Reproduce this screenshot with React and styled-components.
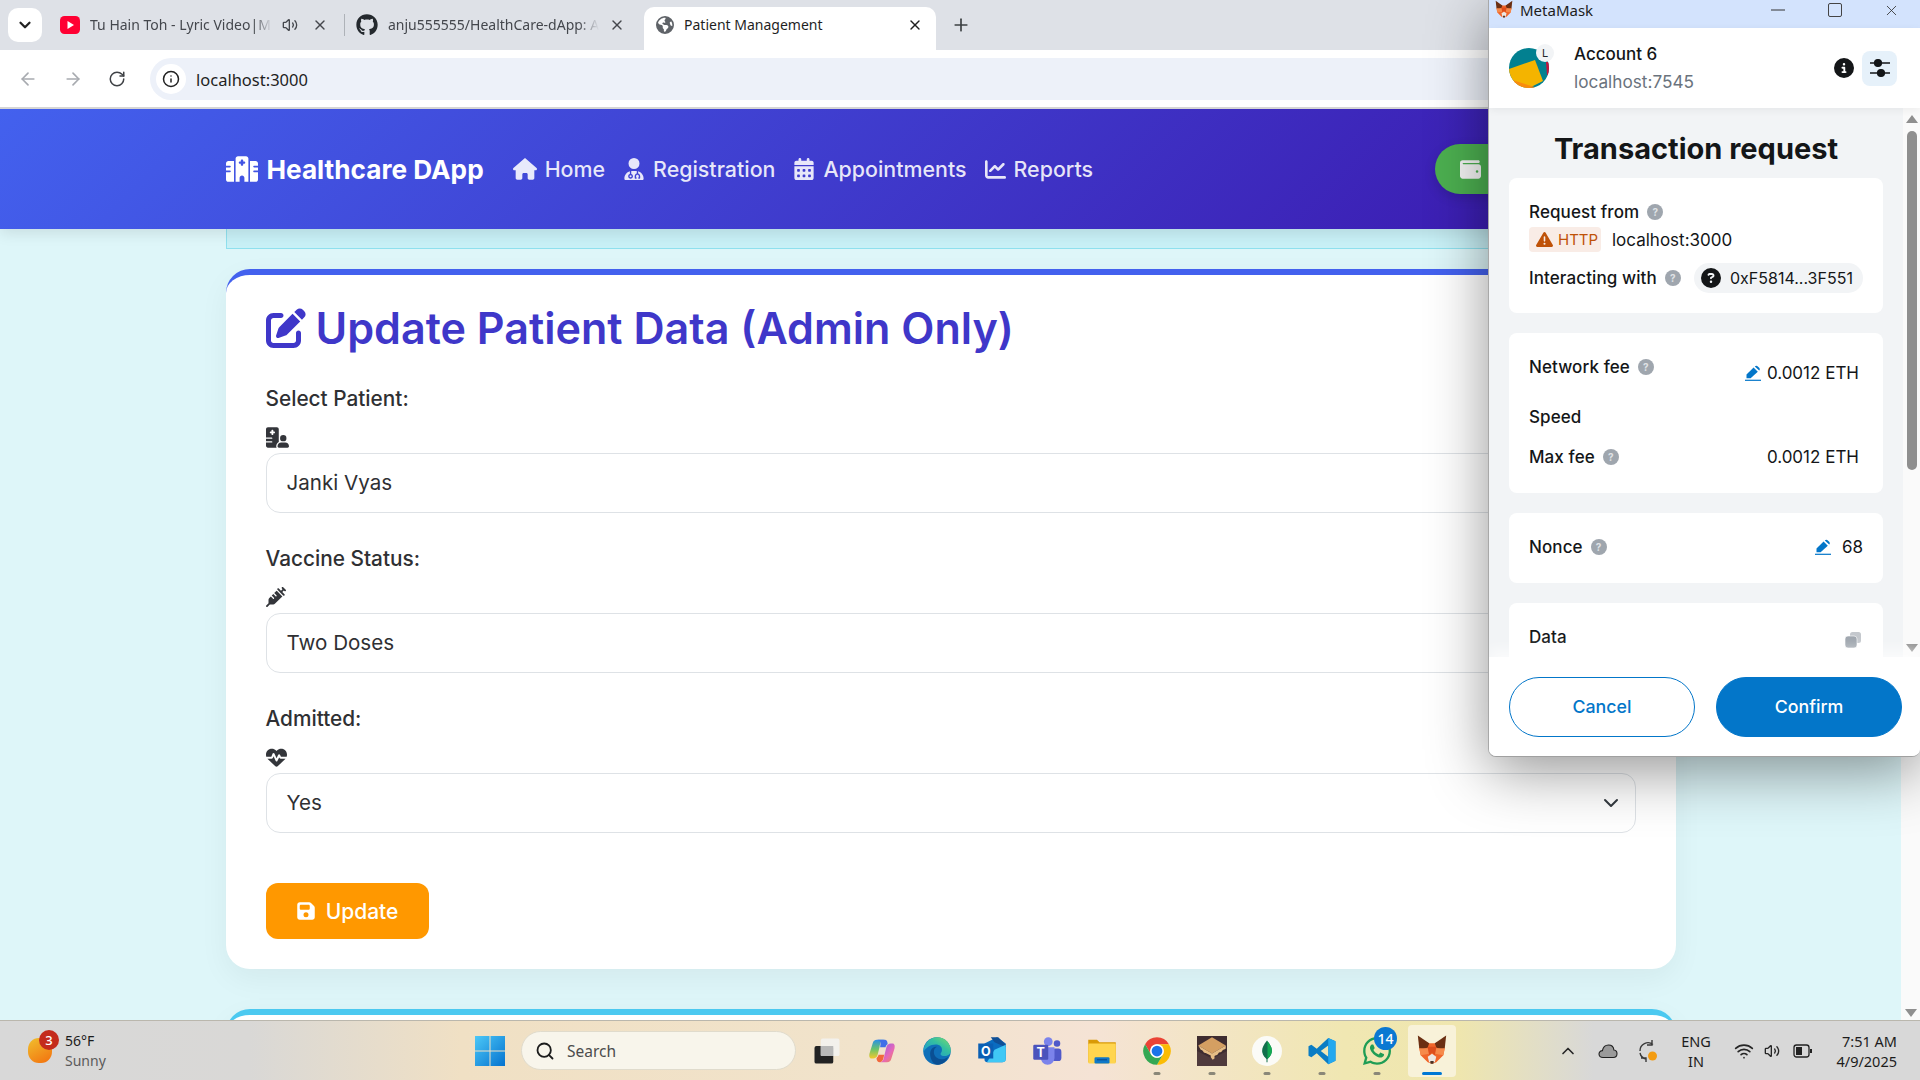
import React from 'react';
import styled, { createGlobalStyle } from 'styled-components';
import {
  FaHospital, FaHouse, FaUserDoctor, FaCalendarDays, FaChartLine, FaPenToSquare, FaHospitalUser,
  FaSyringe, FaHeartPulse, FaFloppyDisk, FaWallet, FaGithub, FaEarthAmericas,
  FaCircleInfo, FaTriangleExclamation, FaCircleQuestion, FaWhatsapp,
} from 'react-icons/fa6';
import {
  ChevronDown, X, Plus, ArrowLeft, ArrowRight, RotateCw, Info, Volume2, Search,
  ChevronUp, Wifi,
} from 'lucide-react';

const PAGE_FONT = `Inter, "Noto Sans", sans-serif`;
const WIN_FONT = `"Noto Sans", "Open Sans", sans-serif`;
const MM_FONT = `Inter, "Noto Sans", sans-serif`;

const Global = createGlobalStyle`
  html, body { margin: 0; padding: 0; height: 100%; overflow: hidden; }
  * { box-sizing: border-box; }
`;

const Screen = styled.div`
  position: relative;
  width: 1920px;
  height: 1080px;
  display: flex;
  flex-direction: column;
  overflow: hidden;
  background: #def6f9;
`;

/* browser chrome */
const TabStrip = styled.div`
  height: 50px;
  background: #dee1e7;
  display: flex;
  align-items: flex-end;
  padding-left: 8px;
  font-family: ${WIN_FONT};
`;

const TabSearch = styled.div`
  width: 34px;
  height: 34px;
  align-self: flex-start;
  margin: 8px 6px 0 0;
  background: #fff;
  border-radius: 10px;
  display: flex;
  align-items: center;
  justify-content: center;
  color: #222;
`;

const Tab = styled.div`
  position: relative;
  width: ${p => p.$w}px;
  height: 43px;
  padding: 0 ${p => p.$pr}px 8px 12px;
  display: flex;
  align-items: center;
  gap: 10px;
  font-size: 14px;
  color: ${p => (p.$active ? '#1f1f1f' : '#44474d')};
  background: ${p => (p.$active ? '#fff' : 'transparent')};
  border-radius: 10px 10px 0 0;
  ${p => p.$sep && `&::before {
    content: '';
    position: absolute;
    left: 0;
    top: 7px;
    width: 1px;
    height: 22px;
    background: #aeb2b8;
  }`}
`;

const TabTitle = styled.span`
  flex: 1;
  white-space: nowrap;
  overflow: hidden;
  ${p => p.$fade && `-webkit-mask-image: linear-gradient(to right, #000 90%, transparent);`}
`;

const TabClose = styled(X)`
  margin-left: ${p => p.$ml || 0}px;
  flex-shrink: 0;
`;

const NewTab = styled.div`
  margin: 0 0 8px 15px;
  height: 34px;
  display: flex;
  align-items: center;
  color: #3c4043;
`;

const AddressRow = styled.div`
  height: 59px;
  background: #fff;
  border-bottom: 2px solid #d5d5d5;
  display: flex;
  align-items: flex-start;
  padding: 8px 0 0 18px;
  font-family: ${WIN_FONT};
`;

const NavArrow = styled.div`
  width: 45px;
  height: 42px;
  display: flex;
  align-items: center;
  color: ${p => (p.$dim ? '#a8abb0' : '#3f4246')};
`;

const Omnibox = styled.div`
  flex: 1;
  height: 42px;
  margin-left: -3px;
  background: #edf1f9;
  border-radius: 21px;
  display: flex;
  align-items: center;
  padding-left: 6px;
  font-size: 16.5px;
  color: #1f1f1f;
`;

const SiteInfo = styled.div`
  width: 30px;
  height: 30px;
  border-radius: 50%;
  background: #fff;
  display: flex;
  align-items: center;
  justify-content: center;
  margin-right: 10px;
`;

/* web page */
const PageView = styled.div`
  flex: 1;
  min-height: 0;
  display: flex;
  overflow: hidden;
`;

const PageColumn = styled.div`
  flex: 1;
  min-width: 0;
  font-family: ${PAGE_FONT};
`;

const PageScrollbar = styled.div`
  width: 19px;
  background: #fafafa;
  display: flex;
  flex-direction: column;
  justify-content: flex-end;
  align-items: center;
  padding-bottom: 3px;
`;

const Arrow = styled.div`
  width: 0;
  height: 0;
  border-left: 6px solid transparent;
  border-right: 6px solid transparent;
  ${p => (p.$up ? 'border-bottom: 8px solid #8f8f8f;' : 'border-top: 8px solid #8f8f8f;')}
`;

const Navbar = styled.nav`
  position: relative;
  height: 120px;
  background: linear-gradient(135deg, #4361ee, #3a0ca3);
  box-shadow: 0 4px 14px rgba(0, 0, 0, 0.1);
`;

const NavInner = styled.div`
  width: 1450px;
  height: 100%;
  margin: 0 auto;
  display: flex;
  align-items: center;
`;

const Brand = styled.div`
  display: flex;
  align-items: center;
  gap: 9px;
  font-size: 26.2px;
  font-weight: 700;
  color: #fff;
  margin-right: 29px;
  white-space: nowrap;
`;

const NavLinks = styled.div`
  display: flex;
  gap: 18px;
`;

const NavLink = styled.a`
  display: flex;
  align-items: center;
  gap: 8px;
  font-size: 21.4px;
  font-weight: 500;
  color: rgba(255, 255, 255, 0.88);
`;

const WalletButton = styled.div`
  margin-left: auto;
  width: 241px;
  height: 50px;
  border-radius: 25px;
  background: #4caf50;
  display: flex;
  align-items: center;
  padding-left: 25px;
  color: #f4f4f4;
  box-shadow: 0 4px 12px rgba(0, 0, 0, 0.15);
`;

const Container = styled.main`
  width: 1450px;
  margin: 0 auto;
`;

const ScrolledCard = styled.div`
  height: 20px;
  margin-bottom: 20px;
  background: #c8f0f6;
  border-left: 1px solid #8fe0ee;
  border-bottom: 1px solid #8fe0ee;
`;

const Card = styled.section`
  background: #fff;
  border-top: 6px solid ${p => p.$accent};
  border-radius: 24px;
  padding: 26px 40px 30px;
  margin-bottom: 40px;
  min-height: ${p => p.$minH || 0}px;
  box-shadow: 0 10px 30px rgba(0, 0, 0, 0.05);
`;

const CardTitle = styled.h2`
  margin: 0 0 30px;
  height: 54px;
  display: flex;
  align-items: center;
  gap: 10px;
  font-size: 43.1px;
  font-weight: 600;
  color: #3f37c9;
  white-space: nowrap;
`;

const FormGroup = styled.div`
  margin-bottom: 32px;
  &:last-of-type { margin-bottom: 50px; }
`;

const FieldLabel = styled.label`
  display: block;
  height: 26px;
  line-height: 27px;
  margin-bottom: 16px;
  font-size: 20.8px;
  font-weight: 500;
  color: #2f3033;
`;

const FieldIcon = styled.div`
  height: 20px;
  margin-bottom: 6px;
  color: #33353a;
  display: flex;
  align-items: center;
`;

const SelectBox = styled.div`
  height: 60px;
  border: 1.5px solid #dee2e6;
  border-radius: 14px;
  padding: 0 12px 1px 20px;
  display: flex;
  align-items: center;
  justify-content: space-between;
  font-size: 20.6px;
  color: #2f3033;
`;

const UpdateButton = styled.button`
  width: 163px;
  height: 56px;
  border: none;
  border-radius: 12px;
  background: #ff9800;
  color: #fff;
  font-family: inherit;
  font-size: 21px;
  font-weight: 500;
  display: flex;
  align-items: center;
  justify-content: center;
  gap: 10px;
`;

/* metamask popup */
const MmWindow = styled.aside`
  position: absolute;
  top: 0;
  right: 0;
  width: 432px;
  height: 757px;
  display: flex;
  flex-direction: column;
  background: #f2f4f6;
  border-left: 1px solid #a8a8a8;
  border-bottom: 1px solid #a0a0a0;
  border-radius: 0 0 8px 8px;
  box-shadow: 0 14px 60px rgba(0, 0, 0, 0.42);
  font-family: ${MM_FONT};
  color: #141618;
  overflow: hidden;
`;

const TitleBar = styled.div`
  height: 28px;
  background: #d3e3fd;
  display: flex;
  align-items: center;
  padding: 0 0 8px 5px;
  gap: 6px;
  font-family: ${WIN_FONT};
  font-size: 15px;
  color: #1c1c1c;
`;

const WindowControls = styled.div`
  margin-left: auto;
  display: flex;
  align-items: center;
`;

const WindowControl = styled.div`
  width: 57px;
  display: flex;
  justify-content: center;
  color: #333;
`;

const AccountBar = styled.header`
  height: 80px;
  background: #fff;
  display: flex;
  align-items: center;
  padding: 0 23px 0 20px;
  box-shadow: 0 2px 8px rgba(0, 0, 0, 0.06);
  position: relative;
  z-index: 1;
`;

const AvatarWrap = styled.div`
  position: relative;
  width: 40px;
  height: 40px;
  margin-right: 25px;
`;

const AvatarBadge = styled.span`
  position: absolute;
  top: -4px;
  right: -5px;
  width: 18px;
  height: 18px;
  border-radius: 50%;
  background: #f2f4f6;
  display: flex;
  align-items: center;
  justify-content: center;
  font-size: 11px;
  color: #24272a;
`;

const AccountText = styled.div`
  flex: 1;
  display: flex;
  flex-direction: column;
  gap: 5px;
`;

const AccountName = styled.div`
  font-size: 17px;
  font-weight: 500;
  line-height: 22px;
`;

const AccountHost = styled.div`
  font-size: 17.2px;
  line-height: 23px;
  color: #6a737d;
`;

const SettingsButton = styled.div`
  width: 35px;
  height: 35px;
  margin-left: 8px;
  border-radius: 8px;
  background: #e6f1fa;
  display: flex;
  align-items: center;
  justify-content: center;
`;

const MmBody = styled.div`
  flex: 1;
  min-height: 0;
  display: flex;
  overflow: hidden;
`;

const MmContent = styled.div`
  flex: 1;
  min-width: 0;
  padding: 22px 20px 0;
  display: flex;
  flex-direction: column;
  gap: 20px;
`;

const MmHeading = styled.h1`
  margin: 0 0 -10px;
  height: 38px;
  line-height: 38px;
  text-align: center;
  font-size: 29px;
  font-weight: 700;
`;

const MmCard = styled.div`
  flex-shrink: 0;
  background: #fff;
  border-radius: 8px;
  padding: 22px 20px ${p => p.$pb || 24}px;
`;

const MmRow = styled.div`
  display: flex;
  align-items: ${p => p.$align || 'center'};
  justify-content: space-between;
  min-height: ${p => p.$h || 24}px;
  margin-top: ${p => p.$mt || 0}px;
  padding-right: ${p => p.$pr || 0}px;
`;

const MmLabel = styled.div`
  display: flex;
  align-items: center;
  height: 24px;
  gap: 8px;
  font-size: 17px;
  font-weight: 500;
  letter-spacing: 0.1px;
`;

const Help = styled.span`
  width: 16px;
  height: 16px;
  border-radius: 50%;
  background: #9fa6ae;
  color: #dfe2e5;
  font-size: 10px;
  font-weight: 700;
  display: flex;
  align-items: center;
  justify-content: center;
`;

const OriginRow = styled.div`
  display: flex;
  align-items: center;
  gap: 11px;
  margin-top: 3px;
  font-size: 17px;
`;

const HttpBadge = styled.span`
  width: 72px;
  height: 25px;
  border-radius: 4px;
  background: #f9ece6;
  color: #bf5208;
  display: flex;
  align-items: center;
  gap: 5px;
  padding-left: 7px;
  font-size: 15px;
`;

const AddressPill = styled.div`
  width: 169px;
  height: 30px;
  border-radius: 15px;
  background: #f2f4f6;
  display: flex;
  align-items: center;
  gap: 9px;
  padding-left: 7px;
  font-size: 16px;
  white-space: nowrap;
`;

const MmValue = styled.div`
  display: flex;
  align-items: center;
  gap: ${p => p.$gap || 6}px;
  font-size: 17px;
  line-height: 20px;
  margin-top: ${p => p.$mt || 0}px;
`;

const MmScrollbar = styled.div`
  width: 17px;
  background: #fafafa;
  display: flex;
  flex-direction: column;
  align-items: center;
  padding-top: 7px;
`;

const MmThumb = styled.div`
  width: 10px;
  height: 339px;
  margin-top: 8px;
  border-radius: 5px;
  background: #8f8f8f;
`;

const MmThumbTrack = styled.div`
  flex: 1;
`;

const MmArrowBox = styled.div`
  padding-bottom: 5px;
`;

const MmFooter = styled.footer`
  height: 99px;
  background: #fff;
  display: flex;
  gap: 21px;
  padding: 20px 18px 0 20px;
  position: relative;
  box-shadow: 0 -8px 12px rgba(255, 255, 255, 0.6);
`;

const MmButton = styled.button`
  width: 186px;
  height: 60px;
  padding: 0 0 2px;
  border-radius: 30px;
  border: 1px solid #0376c9;
  background: ${p => (p.$primary ? '#0376c9' : '#fff')};
  color: ${p => (p.$primary ? '#fff' : '#0376c9')};
  font-family: inherit;
  font-size: 17.8px;
  font-weight: 500;
`;

/* windows taskbar */
const Taskbar = styled.footer`
  position: relative;
  height: 60px;
  flex-shrink: 0;
  border-top: 1px solid #bab7ad;
  background: linear-gradient(90deg, #d8d8d8 0%, #d9d8d6 13%, #f0e0c4 24%, #f1e3cb 45%, #f5e3d5 57%, #f0e7b2 70%, #efe6ae 76%, #d8d8d8 83%, #d8d8d8 100%);
  display: flex;
  align-items: center;
  font-family: ${WIN_FONT};
  color: #1c1c1c;
`;

const Weather = styled.div`
  width: 475px;
  padding-left: 28px;
  display: flex;
  align-items: center;
  gap: 13px;
`;

const SunWrap = styled.div`
  position: relative;
  width: 24px;
  height: 25px;
  border-radius: 45%;
  background: linear-gradient(150deg, #f0c02e, #f36f0e);
`;

const CountBadge = styled.span`
  position: absolute;
  top: ${p => p.$top}px;
  right: ${p => p.$right}px;
  width: ${p => p.$size}px;
  height: ${p => p.$size}px;
  border-radius: 50%;
  background: ${p => p.$bg};
  color: #fff;
  font-size: ${p => p.$font}px;
  font-weight: 500;
  display: flex;
  align-items: center;
  justify-content: center;
`;

const WeatherText = styled.div`
  display: flex;
  flex-direction: column;
  gap: 2px;
  font-size: 14px;
  line-height: 18px;
`;

const WeatherSub = styled.span`
  color: #5b5b5b;
`;

const SearchBox = styled.div`
  width: 275px;
  height: 39px;
  margin: 0 3px 0 16px;
  border-radius: 20px;
  background: #f8f5eb;
  border: 1px solid #e0dbcc;
  display: flex;
  align-items: center;
  gap: 12px;
  padding-left: 13px;
  font-size: 15.5px;
  color: #4c4c4c;
`;

const TaskSlot = styled.div`
  position: relative;
  width: 55px;
  height: 52px;
  display: flex;
  align-items: center;
  justify-content: center;
  border-radius: 4px;
  ${p => p.$active && 'background: #f8f2d9; width: 48px; margin: 0 3.5px;'}
  ${p => p.$dot && `&::after {
    content: '';
    position: absolute;
    bottom: 2px;
    left: 50%;
    transform: translateX(-50%);
    width: ${p.$active ? 20 : 7}px;
    height: 3px;
    border-radius: 2px;
    background: ${p.$active ? '#0078d4' : '#8a8778'};
  }`}
`;

const Tray = styled.div`
  margin-left: auto;
  display: flex;
  align-items: center;
  padding-right: 23px;
`;

const TraySlot = styled.div`
  width: ${p => p.$w}px;
  display: flex;
  justify-content: center;
  color: #262626;
`;

const TrayStack = styled.div`
  width: ${p => p.$w}px;
  display: flex;
  flex-direction: column;
  align-items: ${p => p.$align || 'center'};
  gap: 2px;
  font-size: 14.5px;
  line-height: 18px;
  white-space: nowrap;
`;

const Icon = ({ size = 30, children }) => (
  <svg width={size} height={size} viewBox="0 0 24 24">{children}</svg>
);

const YoutubeLogo = () => (
  <svg width="20" height="20" viewBox="0 0 20 20">
    <rect x="0" y="1" width="20" height="18" rx="4.5" fill="#ff0033" />
    <polygon points="7.5,6 14,10 7.5,14" fill="#fff" />
  </svg>
);

const Fox = ({ size = 34 }) => (
  <Icon size={size}>
    <polygon points="3,10 6,5 10,6.5 14,6.5 18,5 21,10 20,15 15,20 12,21 9,20 4,15" fill="#f0662a" />
    <polygon points="2,1 10,6.5 9,9.5 5,11 3,10" fill="#6b2f12" />
    <polygon points="22,1 14,6.5 15,9.5 19,11 21,10" fill="#6b2f12" />
    <polygon points="3,10 9,10 10,14 4,15" fill="#f68a4a" />
    <polygon points="21,10 15,10 14,14 20,15" fill="#f68a4a" />
    <polygon points="9,9 15,9 14,15 12,13 10,15" fill="#dd4e1c" />
    <polygon points="9,16 12,14 15,16 14,20 10,20" fill="#ece7e2" />
    <polygon points="10.8,19 13.2,19 13,21 11,21" fill="#4a3226" />
  </Icon>
);

const ChromeLogo = () => (
  <Icon>
    <path d="M12 1A11 11 0 0 1 21.53 6.5H12A5.5 5.5 0 0 0 7.24 14.75L2.47 6.5A11 11 0 0 1 12 1Z" fill="#ea4335" />
    <path d="M21.53 6.5A11 11 0 0 1 12 23L16.76 14.75A5.5 5.5 0 0 0 12 6.5Z" fill="#fbbc04" />
    <path d="M12 23A11 11 0 0 1 2.47 6.5L7.24 14.75A5.5 5.5 0 0 0 16.76 14.75Z" fill="#34a853" />
    <circle cx="12" cy="12" r="5.4" fill="#fff" />
    <circle cx="12" cy="12" r="4.3" fill="#1a73e8" />
  </Icon>
);

const TaskViewLogo = () => (
  <Icon>
    <rect x="2" y="8" width="15" height="14" rx="1.5" fill="#222" />
    <rect x="7" y="2" width="15" height="14" rx="1.5" fill="#f4f4f4" fillOpacity="0.8" />
    <rect x="7" y="8" width="10" height="8" fill="#b8b8b8" />
  </Icon>
);

const CopilotLogo = () => (
  <Icon>
    <defs>
      <linearGradient id="copA" x1="0" y1="0" x2="0" y2="1">
        <stop offset="0" stopColor="#2a8fe8" /><stop offset="0.5" stopColor="#6ac46a" /><stop offset="1" stopColor="#f5c92c" />
      </linearGradient>
      <linearGradient id="copB" x1="0" y1="0" x2="1" y2="1">
        <stop offset="0" stopColor="#8a5cf0" /><stop offset="0.6" stopColor="#e668b8" /><stop offset="1" stopColor="#f28a4c" />
      </linearGradient>
    </defs>
    <path d="M8 3H14C11 3 10.5 6 10 9L8.5 15C8 17 6.5 18 5 18H3.5C2 18 1.5 16 2 14L4.5 6C5 4 6 3 8 3Z" fill="url(#copA)" />
    <path d="M16 21H10C13 21 13.5 18 14 15L15.5 9C16 7 17.5 6 19 6H20.5C22 6 22.5 8 22 10L19.5 18C19 20 18 21 16 21Z" fill="url(#copB)" />
    <path d="M8 3H14.5C16 3 16.5 5 16.5 6.5C15.5 7 15 8 14.8 9H10.5C11 6 11.5 3 8 3Z" fill="#3f6fe8" />
    <path d="M10 21C9 21 7.5 19.5 7.6 17.5C8.5 17 9 16 9.2 15H13.7C13.2 18 12.6 21 10 21Z" fill="#f2683c" />
  </Icon>
);

const EdgeLogo = () => (
  <Icon>
    <defs>
      <linearGradient id="edgeTop" x1="0" y1="1" x2="1" y2="0">
        <stop offset="0" stopColor="#1a8fd8" /><stop offset="0.6" stopColor="#34c0a0" /><stop offset="1" stopColor="#7fdc6a" />
      </linearGradient>
    </defs>
    <circle cx="12" cy="12" r="11" fill="#0f6fb8" />
    <path d="M12 1C18.5 1 23 6 23 11.5C23 14.5 20.5 16 18 16C16 16 14.8 15.2 14.8 14.3C14.8 13.5 16 13 16 11C16 8.5 14 6.8 11 6.8C6.5 6.8 2.8 9.5 1 13C1 6.5 6 1 12 1Z" fill="url(#edgeTop)" />
    <path d="M6.5 14C6.5 10 9.5 8.5 12 8.5C10 9.5 9.5 11 9.5 13C9.5 16.5 13 19 16.5 18.5C18.5 18.2 20 17.5 21 16.5C19.5 20.5 16 23 12 23C8.5 22.5 6.5 18 6.5 14Z" fill="#0a4f93" />
  </Icon>
);

const OutlookLogo = () => (
  <Icon>
    <path d="M6 6L16 1L23 6V18C23 20 22 21 20 21H8C7 21 6 20 6 19Z" fill="#0a6cc0" />
    <path d="M11 1L17 1L23 7V9L14 5Z" fill="#0f4f96" />
    <path d="M8 21L14 11L23 7V19C23 20 22 21 20 21Z" fill="#40c8f5" />
    <rect x="1" y="6" width="12" height="12" fill="#0a5fb4" />
    <text x="7" y="15.8" textAnchor="middle" fontFamily="Inter, sans-serif" fontSize="10" fontWeight="700" fill="#fff">O</text>
  </Icon>
);

const TeamsLogo = () => (
  <Icon>
    <circle cx="20" cy="6" r="2.6" fill="#5059c9" />
    <rect x="16" y="10" width="7.5" height="10" rx="2.5" fill="#5059c9" />
    <circle cx="13" cy="4.5" r="3.5" fill="#7b83eb" />
    <path d="M7 9H18V17C18 20.5 15.5 23 12.5 23C9.5 23 7 20.5 7 17Z" fill="#7b83eb" />
    <rect x="1" y="7" width="12" height="12" rx="1" fill="#4b53bc" />
    <text x="7" y="16.5" textAnchor="middle" fontFamily="Inter, sans-serif" fontSize="10" fontWeight="700" fill="#fff">T</text>
  </Icon>
);

const FolderLogo = () => (
  <Icon>
    <path d="M1 3H8L10 5H23V21H1Z" fill="#d99a06" />
    <rect x="1" y="6" width="22" height="16" rx="1" fill="#ffd54f" />
    <rect x="6" y="17" width="12" height="5" rx="1" fill="#0f78c8" />
    <rect x="8" y="18.5" width="8" height="1" fill="#0a4f93" />
  </Icon>
);

const GanacheLogo = () => (
  <Icon>
    <rect x="0" y="0" width="24" height="24" fill="#3e2c30" />
    <polygon points="0,12 12,18 24,12 24,24 0,24" fill="#4f3a3c" />
    <polygon points="12,1 23,7.5 12,14 1,7.5" fill="#d49f62" />
    <path d="M1 7.5L12 14L23 7.5V10C22 11 21 10.5 20 12C19 14 18 12 17 14C16 16 15 15 14 16V18L12.5 19L11 17V15.5L7 13.5C5 14 5 11 3 11Z" fill="#e6bd85" />
  </Icon>
);

const MongoLogo = () => (
  <Icon>
    <circle cx="12" cy="12" r="12" fill="#fbfbf7" />
    <path d="M12 3.5C15.3 7.5 16.2 10.2 15.8 13C15.3 16 13 17.6 12.4 18.5V21H11.6V18.5C11 17.6 8.7 16 8.2 13C7.8 10.2 8.7 7.5 12 3.5Z" fill="#12704c" />
    <path d="M12 3.5C15.3 7.5 16.2 10.2 15.8 13C15.3 16 13 17.6 12.4 18.5V3.9Z" fill="#13aa52" />
  </Icon>
);

const VscodeLogo = () => (
  <Icon>
    <path fillRule="evenodd" d="M17 1.5L22.8 4.2V19.8L17 22.5L7.8 13.8L3.5 17L1.2 15.8V8.2L3.5 7L7.8 10.2ZM17 7.5L11 12L17 16.5Z" fill="#0a7cc4" />
    <path d="M17 1.5L22.8 4.2V19.8L17 22.5Z" fill="#24a8ef" />
  </Icon>
);

const WindowsLogo = () => (
  <Icon>
    <defs>
      <linearGradient id="winG" x1="0" y1="0" x2="1" y2="1">
        <stop offset="0" stopColor="#4cc8f7" /><stop offset="1" stopColor="#0472cf" />
      </linearGradient>
    </defs>
    <path d="M0 0H11.6V11.6H0ZM12.4 0H24V11.6H12.4ZM0 12.4H11.6V24H0ZM12.4 12.4H24V24H12.4Z" fill="url(#winG)" />
  </Icon>
);

const Avatar = () => (
  <svg width="40" height="40" viewBox="0 0 40 40">
    <defs><clipPath id="avaClip"><circle cx="20" cy="20" r="20" /></clipPath></defs>
    <g clipPath="url(#avaClip)">
      <rect width="40" height="40" fill="#028090" />
      <polygon points="37,14 40,14 40,27 38,27" fill="#c8143c" />
      <polygon points="0,21 26,12 34,33 20,40 0,40" fill="#f4b400" />
      <polygon points="0,31 29,40 0,40" fill="#f98b0e" />
    </g>
  </svg>
);

const SlidersGlyph = () => (
  <svg width="22" height="22" viewBox="0 0 22 22" fill="none" stroke="#141618" strokeWidth="1.4">
    <path d="M1 6H21M1 16H21" />
    <circle cx="9" cy="6" r="3.4" fill="#141618" />
    <circle cx="12" cy="16" r="3.4" fill="#141618" />
  </svg>
);

const EditGlyph = () => (
  <svg width="16" height="16" viewBox="0 0 16 16" fill="#0376c9">
    <polygon points="1.5,13.2 1.5,9.6 8.6,2.6 12.8,6.8 5.6,13.2" />
    <path d="M9.8 1.4C10.7 0.5 12 0.5 12.8 1.4L14.2 2.8C15 3.6 15 4.8 14.2 5.6Z" />
    <rect x="0" y="14.7" width="16" height="1.2" />
  </svg>
);

const CopyGlyph = () => (
  <svg width="16" height="16" viewBox="0 0 16 16" fill="#9fa6ae">
    <rect x="5" y="0" width="11" height="11" rx="2.5" fill="#c4c8cd" />
    <rect x="0" y="4" width="12" height="12" rx="3" stroke="#fff" strokeWidth="0.6" />
  </svg>
);

const CloudGlyph = () => (
  <svg width="20" height="16" viewBox="0 0 20 16">
    <path d="M5 14.5C2.5 14.5 1 13 1 11C1 9 2.5 7.6 4.4 7.6C5 4.5 7.4 2 10.5 2C13.5 2 15.6 4.2 15.9 7C17.8 7.2 19 8.8 19 10.8C19 13 17.4 14.5 15.2 14.5Z" fill="#9a9a9a" stroke="#1f1f1f" strokeWidth="1.1" />
  </svg>
);

const SyncGlyph = () => (
  <svg width="22" height="24" viewBox="0 0 22 24" fill="none" stroke="#3a3a3a" strokeWidth="1.4">
    <path d="M3 12A8 8 0 0 1 16 5.5M15 1V6H10" />
    <path d="M3 14A8 8 0 0 0 9 20M9 23V19H4" />
    <circle cx="15.5" cy="17" r="4.5" fill="#f39c12" stroke="none" />
  </svg>
);

const BatteryGlyph = () => (
  <svg width="20" height="20" viewBox="0 0 20 20" fill="none">
    <rect x="1" y="4" width="15" height="12" rx="2.5" stroke="#222" strokeWidth="1.3" />
    <rect x="3" y="6" width="6" height="8" fill="#222" />
    <rect x="17" y="8" width="2" height="4" fill="#222" />
  </svg>
);

const TASK_ICONS = [
  { key: 'taskview', node: <TaskViewLogo /> },
  { key: 'copilot', node: <CopilotLogo /> },
  { key: 'edge', node: <EdgeLogo /> },
  { key: 'outlook', node: <OutlookLogo /> },
  { key: 'teams', node: <TeamsLogo /> },
  { key: 'files', node: <FolderLogo /> },
  { key: 'chrome', node: <ChromeLogo />, dot: true },
  { key: 'ganache', node: <GanacheLogo />, dot: true },
  { key: 'mongo', node: <MongoLogo />, dot: true },
  { key: 'vscode', node: <VscodeLogo />, dot: true },
  { key: 'whatsapp', node: <FaWhatsapp size={32} color="#1f9d55" />, dot: true, badge: '14' },
  { key: 'metamask', node: <Fox />, dot: true, active: true },
];

const FIELDS = [
  { label: 'Select Patient:', icon: <FaHospitalUser size={23} />, value: 'Janki Vyas' },
  { label: 'Vaccine Status:', icon: <FaSyringe size={20} />, value: 'Two Doses' },
  { label: 'Admitted:', icon: <FaHeartPulse size={21} />, value: 'Yes' },
];

const App = () => (
  <Screen>
    <Global />
    <TabStrip>
      <TabSearch><ChevronDown size={18} strokeWidth={3} /></TabSearch>
      <Tab $w={296} $pr={16}>
        <YoutubeLogo />
        <TabTitle $fade>Tu Hain Toh - Lyric Video|M</TabTitle>
        <Volume2 size={16} />
        <TabClose size={16} $ml={4} />
      </Tab>
      <Tab $w={300} $pr={19} $sep>
        <FaGithub size={22} color="#24292e" />
        <TabTitle $fade>anju555555/HealthCare-dApp: A</TabTitle>
        <TabClose size={16} />
      </Tab>
      <Tab $w={292} $pr={13} $active>
        <FaEarthAmericas size={18} color="#5f6368" />
        <TabTitle>Patient Management</TabTitle>
        <TabClose size={16} color="#1f1f1f" />
      </Tab>
      <NewTab><Plus size={20} /></NewTab>
    </TabStrip>
    <AddressRow>
      <NavArrow $dim><ArrowLeft size={20} /></NavArrow>
      <NavArrow $dim><ArrowRight size={20} /></NavArrow>
      <NavArrow><RotateCw size={18} /></NavArrow>
      <Omnibox>
        <SiteInfo><Info size={18} color="#222" /></SiteInfo>
        localhost:3000
      </Omnibox>
    </AddressRow>

    <PageView>
      <PageColumn>
        <Navbar>
          <NavInner>
            <Brand><FaHospital size={32} />Healthcare DApp</Brand>
            <NavLinks>
              <NavLink><FaHouse size={24} />Home</NavLink>
              <NavLink><FaUserDoctor size={22} />Registration</NavLink>
              <NavLink><FaCalendarDays size={22} />Appointments</NavLink>
              <NavLink><FaChartLine size={21} />Reports</NavLink>
            </NavLinks>
            <WalletButton><FaWallet size={21} /></WalletButton>
          </NavInner>
        </Navbar>
        <Container>
          <ScrolledCard />
          <Card $accent="#4361ee">
            <CardTitle><FaPenToSquare size={40} />Update Patient Data (Admin Only)</CardTitle>
            {FIELDS.map(f => (
              <FormGroup key={f.label}>
                <FieldLabel>{f.label}</FieldLabel>
                <FieldIcon>{f.icon}</FieldIcon>
                <SelectBox>
                  {f.value}
                  <ChevronDown size={24} color="#343a40" strokeWidth={2} />
                </SelectBox>
              </FormGroup>
            ))}
            <UpdateButton><FaFloppyDisk size={20} />Update</UpdateButton>
          </Card>
          <Card $accent="#4cc9f0" $minH={200} />
        </Container>
      </PageColumn>
      <PageScrollbar><Arrow /></PageScrollbar>
    </PageView>

    <Taskbar>
      <Weather>
        <SunWrap>
          <CountBadge $top={-8} $right={-7} $size={20} $bg="#c42b1c" $font={13}>3</CountBadge>
        </SunWrap>
        <WeatherText>
          <span>56°F</span>
          <WeatherSub>Sunny</WeatherSub>
        </WeatherText>
      </Weather>
      <WindowsLogo />
      <SearchBox><Search size={20} color="#1c1c1c" strokeWidth={2.2} />Search</SearchBox>
      {TASK_ICONS.map(t => (
        <TaskSlot key={t.key} $dot={t.dot} $active={t.active}>
          {t.node}
          {t.badge && <CountBadge $top={2} $right={7} $size={23} $bg="#0a78d2" $font={14}>{t.badge}</CountBadge>}
        </TaskSlot>
      ))}
      <Tray>
        <TraySlot $w={40}><ChevronUp size={20} /></TraySlot>
        <TraySlot $w={40}><CloudGlyph /></TraySlot>
        <TraySlot $w={40}><SyncGlyph /></TraySlot>
        <TrayStack $w={56}><span>ENG</span><span>IN</span></TrayStack>
        <TraySlot $w={40}><Wifi size={20} /></TraySlot>
        <TraySlot $w={16}><Volume2 size={18} /></TraySlot>
        <TraySlot $w={46}><BatteryGlyph /></TraySlot>
        <TrayStack $w={71} $align="flex-end"><span>7:51 AM</span><span>4/9/2025</span></TrayStack>
      </Tray>
    </Taskbar>

    <MmWindow>
      <TitleBar>
        <Fox size={20} />
        MetaMask
        <WindowControls>
          <WindowControl><svg width="14" height="14" viewBox="0 0 14 14"><path d="M0 7H14" stroke="#333" /></svg></WindowControl>
          <WindowControl><svg width="14" height="14" viewBox="0 0 14 14"><rect x="0.5" y="0.5" width="13" height="13" rx="1.5" fill="none" stroke="#444" /></svg></WindowControl>
          <WindowControl><X size={17} strokeWidth={1.2} /></WindowControl>
        </WindowControls>
      </TitleBar>
      <AccountBar>
        <AvatarWrap>
          <Avatar />
          <AvatarBadge>L</AvatarBadge>
        </AvatarWrap>
        <AccountText>
          <AccountName>Account 6</AccountName>
          <AccountHost>localhost:7545</AccountHost>
        </AccountText>
        <FaCircleInfo size={20} color="#141618" />
        <SettingsButton><SlidersGlyph /></SettingsButton>
      </AccountBar>
      <MmBody>
        <MmContent>
          <MmHeading>Transaction request</MmHeading>
          <MmCard $pb={20}>
            <MmLabel>Request from <Help>?</Help></MmLabel>
            <OriginRow>
              <HttpBadge><FaTriangleExclamation size={17} />HTTP</HttpBadge>
              localhost:3000
            </OriginRow>
            <MmRow $mt={11} $h={30}>
              <MmLabel>Interacting with <Help>?</Help></MmLabel>
              <AddressPill><FaCircleQuestion size={20} color="#141618" />0xF5814...3F551</AddressPill>
            </MmRow>
          </MmCard>
          <MmCard>
            <MmRow $h={36} $align="flex-start" $pr={4}>
              <MmLabel>Network fee <Help>?</Help></MmLabel>
              <MmValue $mt={8}><EditGlyph />0.0012 ETH</MmValue>
            </MmRow>
            <MmRow $mt={14}><MmLabel>Speed</MmLabel></MmRow>
            <MmRow $mt={16} $pr={4}>
              <MmLabel>Max fee <Help>?</Help></MmLabel>
              <MmValue>0.0012 ETH</MmValue>
            </MmRow>
          </MmCard>
          <MmCard>
            <MmRow>
              <MmLabel>Nonce <Help>?</Help></MmLabel>
              <MmValue $gap={11}><EditGlyph />68</MmValue>
            </MmRow>
          </MmCard>
          <MmCard>
            <MmRow $pr={2}>
              <MmLabel>Data</MmLabel>
              <MmValue $mt={6}><CopyGlyph /></MmValue>
            </MmRow>
          </MmCard>
        </MmContent>
        <MmScrollbar>
          <Arrow $up />
          <MmThumb />
          <MmThumbTrack />
          <MmArrowBox><Arrow /></MmArrowBox>
        </MmScrollbar>
      </MmBody>
      <MmFooter>
        <MmButton>Cancel</MmButton>
        <MmButton $primary>Confirm</MmButton>
      </MmFooter>
    </MmWindow>
  </Screen>
);

export default App;
